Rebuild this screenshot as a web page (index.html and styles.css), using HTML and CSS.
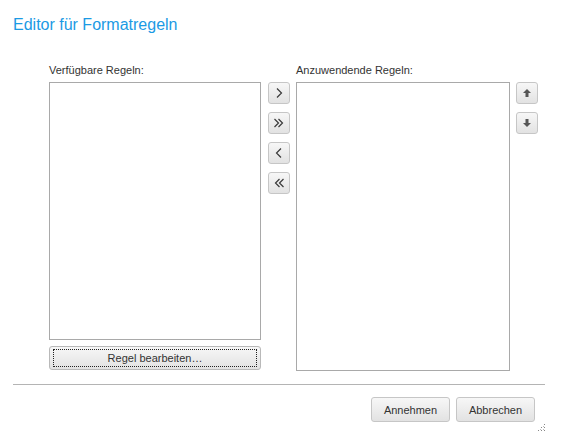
FILE: index.html
```html
<!DOCTYPE html>
<html lang="de">
<head>
  <meta charset="UTF-8">
  <title>Editor für Formatregeln</title>
  <link rel="stylesheet" href="styles.css">
</head>
<body>
  <div class="dialog">
    <h1 class="title">Editor für Formatregeln</h1>

    <div class="rules">
      <div class="col col-left">
        <label class="caption">Verfügbare Regeln:</label>
        <div class="listbox list-left"></div>
        <button class="btn btn-wide"><span class="focus">Regel bearbeiten…</span></button>
      </div>

      <div class="tools">
        <button class="btn btn-icon" title="Hinzufügen">
          <svg width="10" height="12" viewBox="0 0 10 12"><polyline points="3,1.5 7.5,6 3,10.5" fill="none" stroke="#3a3a3a" stroke-width="1.2"/></svg>
        </button>
        <button class="btn btn-icon" title="Alle hinzufügen">
          <svg width="12" height="12" viewBox="0 0 12 12"><polyline points="1.5,2 5.5,6 1.5,10" fill="none" stroke="#3a3a3a" stroke-width="1.2"/><polyline points="5.5,2 9.5,6 5.5,10" fill="none" stroke="#3a3a3a" stroke-width="1.2"/></svg>
        </button>
        <button class="btn btn-icon" title="Entfernen">
          <svg width="10" height="12" viewBox="0 0 10 12"><polyline points="7,1.5 2.5,6 7,10.5" fill="none" stroke="#3a3a3a" stroke-width="1.2"/></svg>
        </button>
        <button class="btn btn-icon" title="Alle entfernen">
          <svg width="12" height="12" viewBox="0 0 12 12"><polyline points="6.5,2 2.5,6 6.5,10" fill="none" stroke="#3a3a3a" stroke-width="1.2"/><polyline points="10.5,2 6.5,6 10.5,10" fill="none" stroke="#3a3a3a" stroke-width="1.2"/></svg>
        </button>
      </div>

      <div class="col col-right">
        <label class="caption">Anzuwendende Regeln:</label>
        <div class="listbox list-right"></div>
      </div>

      <div class="tools tools-order">
        <button class="btn btn-icon" title="Nach oben">
          <svg width="10" height="10" viewBox="0 0 10 10"><path d="M5 1 L9 5 H6.5 V9 H3.5 V5 H1 Z" fill="#555"/></svg>
        </button>
        <button class="btn btn-icon" title="Nach unten">
          <svg width="10" height="10" viewBox="0 0 10 10"><path d="M5 9 L9 5 H6.5 V1 H3.5 V5 H1 Z" fill="#555"/></svg>
        </button>
      </div>
    </div>

    <hr class="sep">

    <div class="footer">
      <button class="btn btn-action">Annehmen</button>
      <button class="btn btn-action">Abbrechen</button>
    </div>

    <svg class="grip" width="10" height="10" viewBox="0 0 10 10">
      <rect x="7" y="1" width="1" height="1" fill="#888"/>
      <rect x="4" y="4" width="1" height="1" fill="#888"/>
      <rect x="7" y="4" width="1" height="1" fill="#888"/>
      <rect x="1" y="7" width="1" height="1" fill="#888"/>
      <rect x="4" y="7" width="1" height="1" fill="#888"/>
      <rect x="7" y="7" width="1" height="1" fill="#888"/>
      <rect x="6" y="3" width="1" height="1" fill="#bbb"/>
      <rect x="3" y="6" width="1" height="1" fill="#bbb"/>
      <rect x="6" y="6" width="1" height="1" fill="#bbb"/>
    </svg>
  </div>
</body>
</html>
```

FILE: styles.css
```css
body {
  margin: 0;
  padding: 0;
  background: white;
  font-family: "Liberation Sans", Arial, sans-serif;
  color: #333;
}
.dialog {
  position: relative;
  width: 561px;
  height: 447px;
  padding: 0 16px 0 13px;
  box-sizing: border-box;
}
.title {
  margin: 0;
  padding-top: 15px;
  height: 19px;
  font-size: 16px;
  font-weight: normal;
  color: #1b9ae4;
  line-height: 19px;
}
.rules {
  display: flex;
  margin-top: 30px;
  margin-left: 36px;
}
.col {
  display: flex;
  flex-direction: column;
}
.col-left {
  width: 212px;
}
.col-right {
  width: 214px;
}
.caption {
  font-size: 11px;
  line-height: 13px;
  height: 13px;
  margin-bottom: 5px;
  color: #333;
}
.listbox {
  border: 1px solid #a9a9a9;
  background: white;
  box-sizing: border-box;
}
.list-left {
  height: 258px;
}
.list-right {
  height: 289px;
}
.tools {
  display: flex;
  flex-direction: column;
  gap: 8px;
  padding-top: 18px;
  margin: 0 6px 0 7px;
}
.tools-order {
  margin: 0 0 0 6px;
}
.btn {
  font-family: "Liberation Sans", Arial, sans-serif;
  font-size: 11px;
  color: #333;
  border: 1px solid #c6c6c6;
  border-radius: 3px;
  background: linear-gradient(#f7f7f7, #e2e2e2);
  padding: 0;
  box-sizing: border-box;
}
.btn-icon {
  width: 22px;
  height: 22px;
  display: flex;
  align-items: center;
  justify-content: center;
}
.btn-icon svg {
  display: block;
}
.btn-wide {
  margin-top: 6px;
  height: 24px;
  padding: 2px 3px;
  border-color: #b9b9b9;
}
.focus {
  display: block;
  height: 100%;
  border: 1px dotted #222;
  box-sizing: border-box;
  line-height: 16px;
}
.sep {
  margin: 13px 0 0;
  border: 0;
  border-top: 1px solid #b4b4b4;
  height: 0;
}
.footer {
  display: flex;
  justify-content: flex-end;
  gap: 6px;
  margin-top: 12px;
  padding-right: 10px;
}
.btn-action {
  width: 79px;
  height: 25px;
}
.grip {
  position: absolute;
  right: 14px;
  top: 423px;
}
```
